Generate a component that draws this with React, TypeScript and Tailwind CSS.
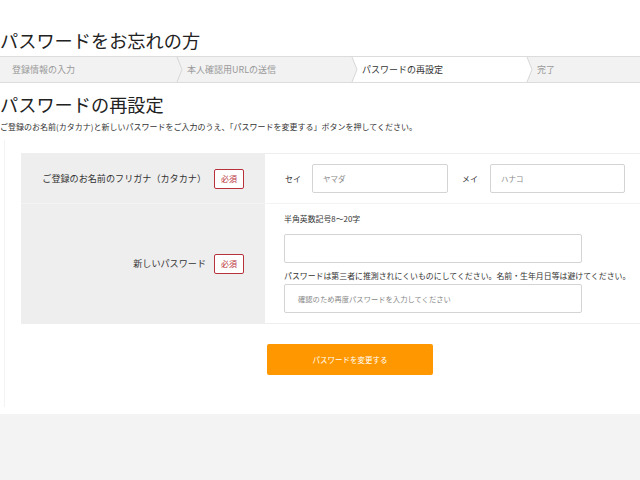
import React from "react";

const font = { fontFamily: '"Noto Sans CJK JP", "Noto Sans", sans-serif' };

function Step({ label, active, last }: { label: string; active?: boolean; last?: boolean }) {
  return (
    <div
      className={`relative h-full flex items-center pl-[12px] text-[9px] ${last ? "flex-1" : "w-[175px] shrink-0"} ${
        active ? "bg-white text-[#333]" : "bg-[#f2f2f2] text-[#999]"
      }`}
    >
      <span>{label}</span>
      {!last && (
        <svg className="absolute top-0 right-[-10px] z-10 h-full w-[10px]" viewBox="0 0 10 25" preserveAspectRatio="none">
          <polygon points="0,0 2,0 7,12.5 2,25 0,25" fill={active ? "#ffffff" : "#f2f2f2"} />
          <polyline points="2,0 7,12.5 2,25" fill="none" stroke="#d6d6d6" strokeWidth="1" />
        </svg>
      )}
    </div>
  );
}

function Badge() {
  return (
    <span className="ml-[8px] inline-flex h-[20px] w-[30px] items-center justify-center rounded-[2px] border border-[#b8303a] bg-white text-[8px] text-[#b8303a]">
      必須
    </span>
  );
}

export default function App() {
  return (
    <div className="min-h-[480px] w-full bg-[#f3f3f3] text-[#333]" style={font}>
      <div className="bg-white pb-[7px]">
        <h1 className="pt-[29px] text-[18.2px] leading-[22px] font-normal text-[#222] whitespace-nowrap">パスワードをお忘れの方</h1>
        <div className="mt-[5px] flex h-[27px] border-y border-[#dcdcdc] bg-[#f2f2f2]">
          <Step label="登録情報の入力" />
          <Step label="本人確認用URLの送信" />
          <Step label="パスワードの再設定" active />
          <Step label="完了" last />
        </div>
        <h2 className="mt-[10px] text-[18.2px] leading-[22px] font-normal text-[#222] whitespace-nowrap">パスワードの再設定</h2>
        <p className="mt-[6px] text-[8px] leading-[12px] text-[#333] whitespace-nowrap">
          ご登録のお名前(カタカナ)と新しいパスワードをご入力のうえ、「パスワードを変更する」ボタンを押してください。
        </p>
        <div className="mt-[7px] ml-[4px] border-l border-[#f3f3f3] pt-[13px] pb-[32px]">
          <div className="ml-[16px] border-t border-[#eeeeee]">
            <div className="flex h-[50px] border-b border-[#f3f3f3]">
              <div className="flex w-[244px] shrink-0 items-center justify-end bg-[#eeeeee] pr-[21px] text-[9.1px]">
                <span className="whitespace-nowrap">ご登録のお名前のフリガナ（カタカナ）</span>
                <Badge />
              </div>
              <div className="flex flex-1 items-center bg-white pl-[20px] text-[8px]">
                <span className="w-[27px] shrink-0">セイ</span>
                <input
                  className="h-[29px] w-[136px] shrink-0 rounded-[2px] border border-[#d4d4d4] pl-[10px] text-[7.5px] text-[#333] placeholder:text-[#888] outline-none"
                  placeholder="ヤマダ"
                />
                <span className="ml-[14px] w-[28px] shrink-0">メイ</span>
                <input
                  className="h-[29px] w-[135px] shrink-0 rounded-[2px] border border-[#d4d4d4] pl-[10px] text-[7.5px] text-[#333] placeholder:text-[#888] outline-none"
                  placeholder="ハナコ"
                />
              </div>
            </div>
            <div className="flex h-[120px] border-b border-[#eeeeee]">
              <div className="flex w-[244px] shrink-0 items-center justify-end bg-[#eeeeee] pr-[21px] text-[9.1px]">
                <span className="whitespace-nowrap">新しいパスワード</span>
                <Badge />
              </div>
              <div className="flex-1 bg-white pl-[19px] pt-[9px] text-[7.9px]">
                <div className="leading-[12px] whitespace-nowrap">半角英数記号8～20字</div>
                <input
                  type="password"
                  className="mt-[9px] block h-[29px] w-[298px] rounded-[2px] border border-[#d4d4d4] outline-none"
                />
                <div className="mt-[7px] leading-[12px] whitespace-nowrap">
                  パスワードは第三者に推測されにくいものにしてください。名前・生年月日等は避けてください。
                </div>
                <input
                  className="mt-[2px] block h-[29px] w-[298px] rounded-[2px] border border-[#d4d4d4] pl-[13px] text-[7.3px] placeholder:text-[#888] outline-none"
                  placeholder="確認のため再度パスワードを入力してください"
                />
              </div>
            </div>
          </div>
          <div className="mt-[20px] pl-[262px]">
            <button className="flex h-[31px] w-[166px] items-center justify-center rounded-[2px] bg-[#ff9800] text-[7.5px] text-white">
              パスワードを変更する
            </button>
          </div>
        </div>
      </div>
    </div>
  );
}
